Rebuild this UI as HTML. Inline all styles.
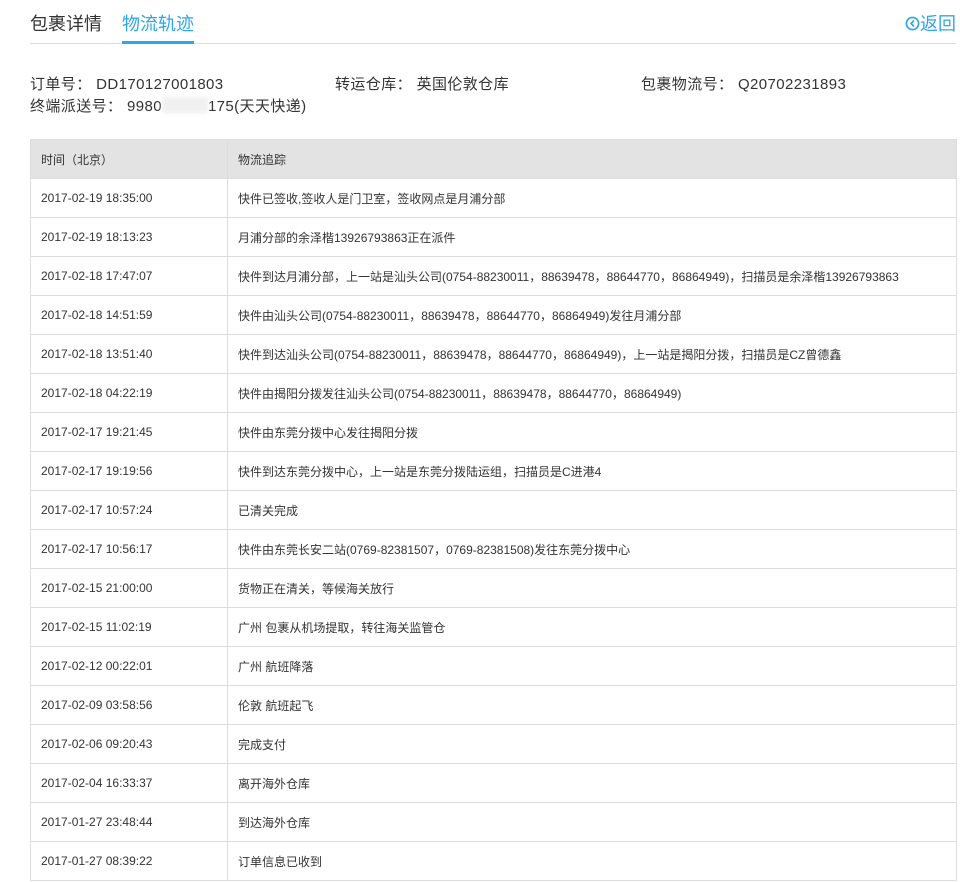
<!DOCTYPE html>
<html><head><meta charset="utf-8"><style>
*{margin:0;padding:0;box-sizing:border-box}
body{width:960px;height:882px;background:#fff;font-family:"Liberation Sans","Noto Sans CJK SC",sans-serif;color:#333;position:relative;overflow:hidden}
.tabs{position:absolute;left:30px;top:0;width:926px;height:44px;border-bottom:1px solid #ddd}
.t{position:absolute;top:12px;font-size:18px;line-height:24px}
.t1{left:0;color:#333}
.t2{left:92px;color:#2ea7e8;height:32px;border-bottom:3px solid #2ea7e8}
.back{position:absolute;right:0;top:12px;font-size:18px;line-height:24px;color:#2ea7e8}
.info{position:absolute;font-size:15px;line-height:22px;color:#333;letter-spacing:0.4px}
table{position:absolute;left:30px;top:139px;width:927px;border-collapse:collapse;font-size:12px}
td,th{border:1px solid #ddd;height:39px;padding:0 10px;text-align:left;font-weight:normal;color:#333}
th{background:#e3e3e3}
td:first-child,th:first-child{width:197px}
</style></head><body>
<div class="tabs"><div class="t t1">包裹详情</div><div class="t t2">物流轨迹</div>
<div class="back"><svg width="15" height="15" viewBox="0 0 16 16" style="vertical-align:-1px"><circle cx="8" cy="8" r="6.5" fill="none" stroke="#2ea7e8" stroke-width="1.8"/><path d="M9.5 4.8L6.5 8l3 3.2" fill="none" stroke="#2ea7e8" stroke-width="1.8"/></svg>返回</div></div>
<div class="info" style="left:30px;top:74px">订单号： DD170127001803</div>
<div class="info" style="left:335px;top:74px">转运仓库： 英国伦敦仓库</div>
<div class="info" style="left:641px;top:74px">包裹物流号： Q20702231893</div>
<div class="info" style="left:30px;top:96px">终端派送号： 9980<span style="display:inline-block;width:46px;height:16px;vertical-align:-2px;background:#f0f0f0;filter:blur(2px)"></span>175(天天快递)</div>
<table>
<tr><th>时间（北京）</th><th>物流追踪</th></tr>
<tr><td>2017-02-19 18:35:00</td><td>快件已签收,签收人是门卫室，签收网点是月浦分部</td></tr>
<tr><td>2017-02-19 18:13:23</td><td>月浦分部的余泽楷13926793863正在派件</td></tr>
<tr><td>2017-02-18 17:47:07</td><td>快件到达月浦分部，上一站是汕头公司(0754-88230011，88639478，88644770，86864949)，扫描员是余泽楷13926793863</td></tr>
<tr><td>2017-02-18 14:51:59</td><td>快件由汕头公司(0754-88230011，88639478，88644770，86864949)发往月浦分部</td></tr>
<tr><td>2017-02-18 13:51:40</td><td>快件到达汕头公司(0754-88230011，88639478，88644770，86864949)，上一站是揭阳分拨，扫描员是CZ曾德鑫</td></tr>
<tr><td>2017-02-18 04:22:19</td><td>快件由揭阳分拨发往汕头公司(0754-88230011，88639478，88644770，86864949)</td></tr>
<tr><td>2017-02-17 19:21:45</td><td>快件由东莞分拨中心发往揭阳分拨</td></tr>
<tr><td>2017-02-17 19:19:56</td><td>快件到达东莞分拨中心，上一站是东莞分拨陆运组，扫描员是C进港4</td></tr>
<tr><td>2017-02-17 10:57:24</td><td>已清关完成</td></tr>
<tr><td>2017-02-17 10:56:17</td><td>快件由东莞长安二站(0769-82381507，0769-82381508)发往东莞分拨中心</td></tr>
<tr><td>2017-02-15 21:00:00</td><td>货物正在清关，等候海关放行</td></tr>
<tr><td>2017-02-15 11:02:19</td><td>广州 包裹从机场提取，转往海关监管仓</td></tr>
<tr><td>2017-02-12 00:22:01</td><td>广州 航班降落</td></tr>
<tr><td>2017-02-09 03:58:56</td><td>伦敦 航班起飞</td></tr>
<tr><td>2017-02-06 09:20:43</td><td>完成支付</td></tr>
<tr><td>2017-02-04 16:33:37</td><td>离开海外仓库</td></tr>
<tr><td>2017-01-27 23:48:44</td><td>到达海外仓库</td></tr>
<tr><td>2017-01-27 08:39:22</td><td>订单信息已收到</td></tr>
</table>
</body></html>
